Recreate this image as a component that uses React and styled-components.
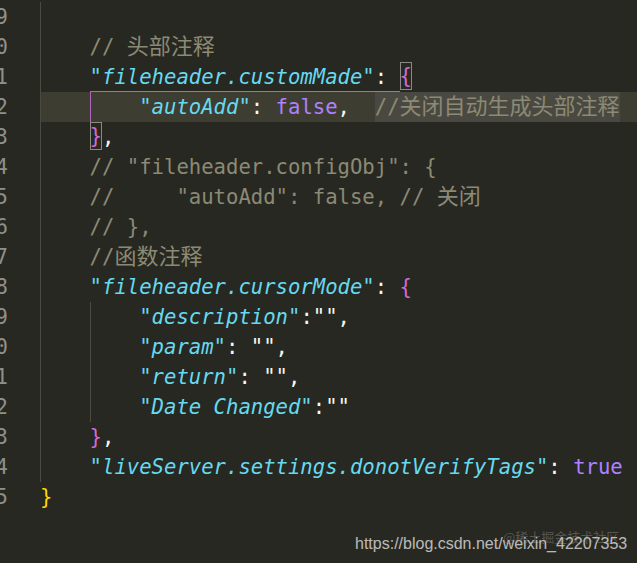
import React from "react";
import styled, { createGlobalStyle } from "styled-components";

const Global = createGlobalStyle`
  html, body { margin: 0; padding: 0; background: #272822; }
  body { width: 637px; height: 563px; overflow: hidden; }
`;

const Editor = styled.div`
  position: relative;
  width: 637px;
  height: 563px;
  overflow: hidden;
  box-sizing: border-box;
  padding-top: 2px;
  background: #272822;
  color: #f8f8f2;
  font-family: "DejaVu Sans Mono", "Noto Sans CJK SC", monospace;
  font-size: 20.6px;
`;

const Row = styled.div`
  display: flex;
  height: 30px;
  line-height: 30px;
  white-space: pre;
`;

const Gutter = styled.div`
  flex: 0 0 40px;
  width: 40px;
  min-width: 0;
  box-sizing: border-box;
  display: flex;
  justify-content: flex-end;
  padding-right: 32px;
  color: #8f908a;
`;

const Num = styled.span`
  flex: none;
`;

const Code = styled.div`
  flex: 1;
  min-width: 0;
  white-space: pre;
  background: ${(p) => (p.$active ? "#3e3d32" : "transparent")};
  box-shadow: ${(p) => (p.$guide ? "inset 1px 0 0 #4a4a42" : "none")};
`;

const Indent = styled.span`
  display: inline-block;
  width: 4ch;
  height: 30px;
  vertical-align: top;
  box-shadow: ${(p) =>
    p.$guide ? `inset 1px 0 0 ${p.$guide}` : "none"};
`;

const Key = styled.span`
  color: #66d9ef;
  font-style: italic;
`;

const Bool = styled.span`
  color: #ae81ff;
`;

const Comment = styled.span`
  color: #8c8a74;
`;

const Cjk = styled.span`
  font-family: "Noto Sans CJK SC", sans-serif;
  font-size: 22px;
  line-height: 20px;
`;

const Brace = styled.span`
  color: ${(p) => p.$color};
  ${(p) =>
    p.$match &&
    `
    display: inline-block;
    height: 28px;
    line-height: 28px;
    vertical-align: top;
    box-shadow: inset 0 0 0 1px #8a8a80;
  `}
`;

const PairTop = styled.span`
  display: inline-block;
  height: 30px;
  vertical-align: top;
  box-shadow: inset 0 -1px 0 #b266b8;
`;

const Selected = styled.span`
  display: inline-block;
  height: 30px;
  vertical-align: top;
  background: #4a4941;
`;

const Watermark = styled.div`
  position: absolute;
  left: 355px;
  top: 535px;
  font-family: "Liberation Sans", Arial, sans-serif;
  font-size: 16px;
  line-height: 18px;
  color: rgba(225, 225, 225, 0.8);
  white-space: nowrap;
`;

const Brand = styled.div`
  position: absolute;
  left: 503px;
  top: 529px;
  font-family: "Noto Sans CJK SC", sans-serif;
  font-size: 13px;
  line-height: 16px;
  color: rgba(255, 255, 255, 0.22);
  white-space: nowrap;
`;

const MAGENTA = "#d36ad3";
const GOLD = "#ffd700";
const GUIDE = "#4a4a42";
const PAIR = "#b266b8";

const lines = [
  { n: 9, guide: true, body: null },
  {
    n: 10,
    guide: true,
    indent: [null],
    body: (
      <Comment>
        {"// "}
        <Cjk>头部注释</Cjk>
      </Comment>
    ),
  },
  {
    n: 11,
    guide: true,
    indent: [null],
    body: (
      <>
        <PairTop>
          <Key>"fileheader.customMade"</Key>
          {": "}
        </PairTop>
        <Brace $color={MAGENTA} $match>
          {"{"}
        </Brace>
      </>
    ),
  },
  {
    n: 12,
    guide: true,
    active: true,
    indent: [null, PAIR],
    body: (
      <>
        <Key>"autoAdd"</Key>
        {": "}
        <Bool>false</Bool>
        {",  "}
        <Selected>
          <Comment>
            {"//"}
            <Cjk>关闭自动生成头部注释</Cjk>
          </Comment>
        </Selected>
      </>
    ),
  },
  {
    n: 13,
    guide: true,
    indent: [null],
    body: (
      <>
        <Brace $color={MAGENTA} $match>
          {"}"}
        </Brace>
        ,
      </>
    ),
  },
  {
    n: 14,
    guide: true,
    indent: [null],
    body: <Comment>{'// "fileheader.configObj": {'}</Comment>,
  },
  {
    n: 15,
    guide: true,
    indent: [null],
    body: (
      <Comment>
        {'//     "autoAdd": false, // '}
        <Cjk>关闭</Cjk>
      </Comment>
    ),
  },
  {
    n: 16,
    guide: true,
    indent: [null],
    body: <Comment>{"// },"}</Comment>,
  },
  {
    n: 17,
    guide: true,
    indent: [null],
    body: (
      <Comment>
        {"//"}
        <Cjk>函数注释</Cjk>
      </Comment>
    ),
  },
  {
    n: 18,
    guide: true,
    indent: [null],
    body: (
      <>
        <Key>"fileheader.cursorMode"</Key>
        {": "}
        <Brace $color={MAGENTA}>{"{"}</Brace>
      </>
    ),
  },
  {
    n: 19,
    guide: true,
    indent: [null, GUIDE],
    body: (
      <>
        <Key>"description"</Key>
        {':"",'}
      </>
    ),
  },
  {
    n: 20,
    guide: true,
    indent: [null, GUIDE],
    body: (
      <>
        <Key>"param"</Key>
        {': "",'}
      </>
    ),
  },
  {
    n: 21,
    guide: true,
    indent: [null, GUIDE],
    body: (
      <>
        <Key>"return"</Key>
        {': "",'}
      </>
    ),
  },
  {
    n: 22,
    guide: true,
    indent: [null, GUIDE],
    body: (
      <>
        <Key>"Date Changed"</Key>
        {':""'}
      </>
    ),
  },
  {
    n: 23,
    guide: true,
    indent: [null],
    body: (
      <>
        <Brace $color={MAGENTA}>{"}"}</Brace>,
      </>
    ),
  },
  {
    n: 24,
    guide: true,
    indent: [null],
    body: (
      <>
        <Key>"liveServer.settings.donotVerifyTags"</Key>
        {": "}
        <Bool>true</Bool>
      </>
    ),
  },
  {
    n: 25,
    guide: false,
    body: <Brace $color={GOLD}>{"}"}</Brace>,
  },
];

export default function App() {
  return (
    <>
      <Global />
      <Editor>
        {lines.map((l) => (
          <Row key={l.n}>
            <Gutter>
              <Num>{l.n}</Num>
            </Gutter>
            <Code $guide={l.guide} $active={l.active}>
              {(l.indent || []).map((g, i) => (
                <Indent key={i} $guide={g} />
              ))}
              {l.body}
            </Code>
          </Row>
        ))}
        <Brand>@稀土掘金技术社区</Brand>
        <Watermark>https://blog.csdn.net/weixin_42207353</Watermark>
      </Editor>
    </>
  );
}
